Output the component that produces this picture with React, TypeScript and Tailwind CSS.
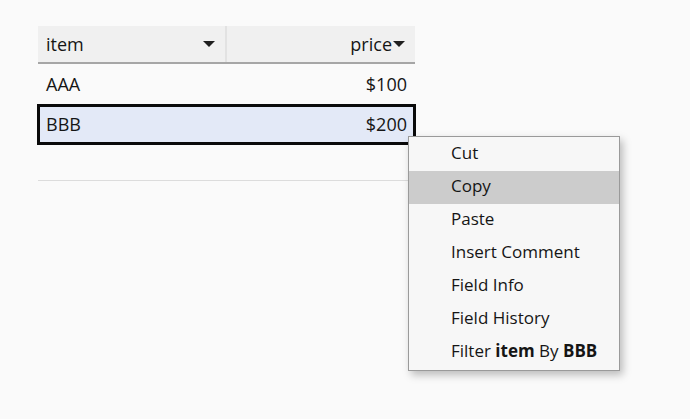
import React from 'react';

const Caret: React.FC = () => (
  <svg width="12" height="6" viewBox="0 0 12 6" className="shrink-0">
    <path d="M0 0 H12 L6 6 Z" fill="#1f1f1f" />
  </svg>
);

const menuItems: React.ReactNode[] = [
  'Cut',
  'Copy',
  'Paste',
  'Insert Comment',
  'Field Info',
  'Field History',
  <>
    Filter{' '}<b className="font-bold">item</b>{' '}By{' '}<b className="font-bold">BBB</b>
  </>,
];

const App: React.FC = () => {
  return (
    <div
      className="relative w-[690px] h-[419px] bg-[#fafafa] text-[#151515] overflow-hidden"
      style={{ fontFamily: '"Open Sans", "Noto Sans", sans-serif' }}
    >
      <div className="pt-[26px] pl-[38px] w-[415px] text-[18px]">
        <div className="flex h-[38px] bg-[#f0f0f0] border-b-2 border-[#a6a6a6]">
          <div className="flex items-center justify-between w-[187px] pl-2 pr-[10px]">
            <span>item</span>
            <Caret />
          </div>
          <div className="w-[2px] bg-[#e2e2e2]" />
          <div className="flex flex-1 items-center justify-end pr-[10px] gap-px">
            <span>price</span>
            <Caret />
          </div>
        </div>
        <div className="flex h-[40px] items-center justify-between px-2">
          <span>AAA</span>
          <span>$100</span>
        </div>
        <div className="flex h-[41px] -ml-px -mr-px items-center justify-between pl-[6px] pr-[6px] bg-[#e3e9f7] border-[3px] border-[#0a0a0a]">
          <span>BBB</span>
          <span>$200</span>
        </div>
        <div className="h-[36px] border-b border-[#dcdcdc]" />
      </div>

      <div className="absolute left-[408px] top-[136px] w-[212px] bg-[#f7f7f7] border border-[#9a9a9a] py-px shadow-[3px_4px_8px_rgba(0,0,0,0.25)] text-[17px]">
        {menuItems.map((label, i) => (
          <div
            key={i}
            className={`h-[33px] flex items-center pl-[42px] ${i === 1 ? 'bg-[#cccccc]' : ''}`}
          >
            <span className="-mt-[3px]">{label}</span>
          </div>
        ))}
      </div>
    </div>
  );
};

export default App;
